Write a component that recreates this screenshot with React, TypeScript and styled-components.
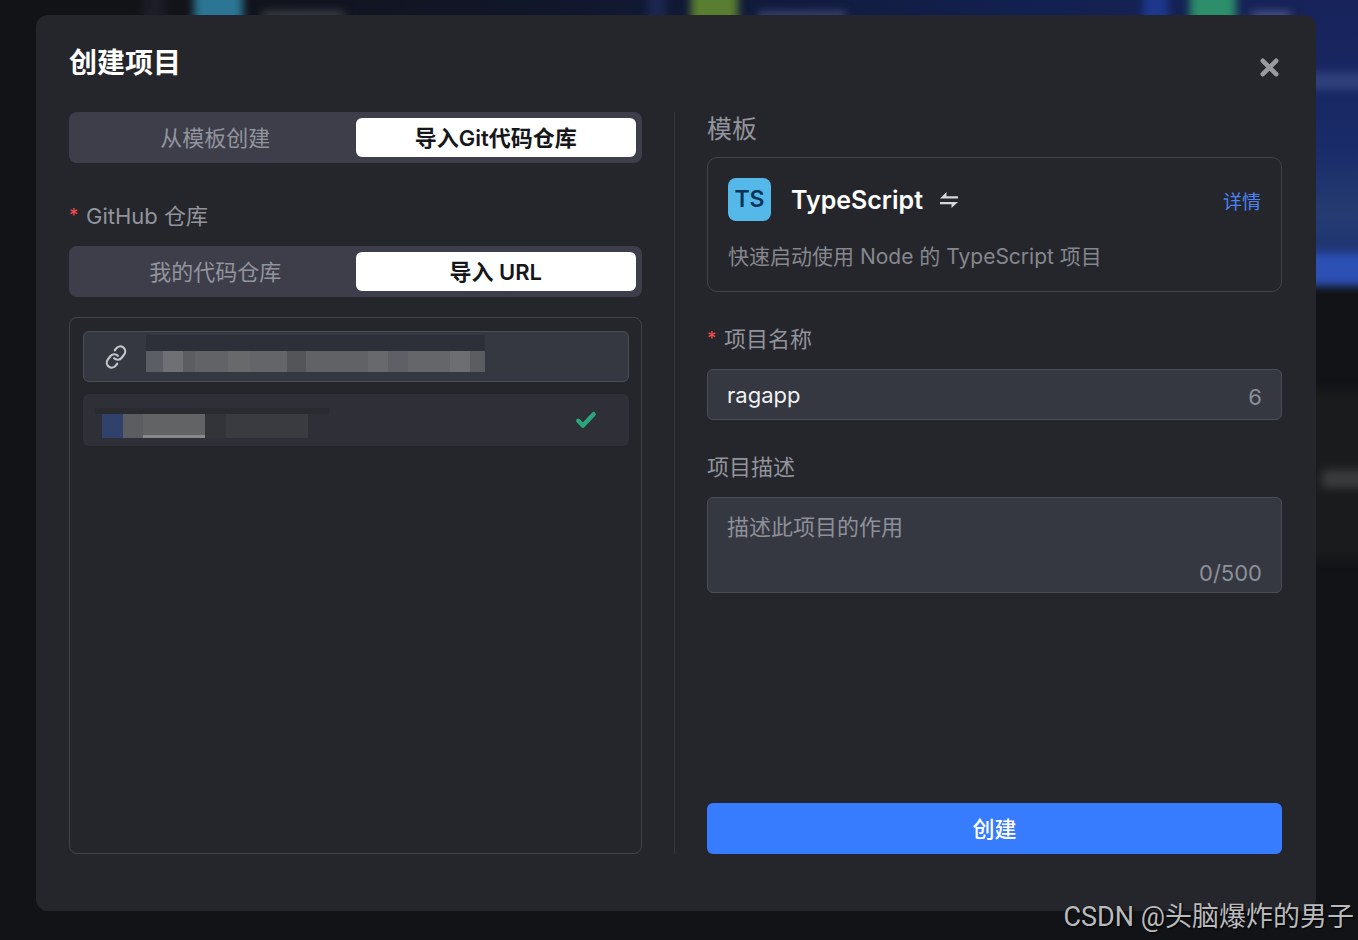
import React, { useState } from "react";
import styled, { createGlobalStyle } from "styled-components";

const cjk = `"Noto Sans CJK SC", sans-serif`;

const GlobalStyle = createGlobalStyle`
  * { box-sizing: border-box; }
  body { margin: 0; background: #121317; font-family: Inter, ${cjk}; color: #fff; }
  button, input, textarea { font-family: inherit; }
`;

const Page = styled.div`
  position: relative;
  display: flex;
  min-height: 100vh;
  padding: 15px 42px 29px 36px;
  overflow: hidden;
`;

const Scenery = styled.svg`
  position: absolute;
  inset: 0;
  width: 100%;
  height: 100%;
`;

const Watermark = styled.div`
  position: absolute;
  right: 4px;
  bottom: 3px;
  font: 27px/40px Roboto, ${cjk};
  color: #b9babb;
  text-shadow: 1px 1px 2px #000;
`;

const Dialog = styled.main`
  position: relative;
  display: flex;
  flex: 1;
  flex-direction: column;
  min-width: 0;
  padding: 28px 34px 57px 33px;
  border-radius: 12px;
  background: #25262b;
`;

const Header = styled.header`
  display: flex;
  align-items: center;
  justify-content: space-between;
  height: 40px;
  margin-bottom: 29px;
`;

const Title = styled.h1`
  margin: 0;
  font-size: 28px;
  line-height: 40px;
  font-weight: 600;
`;

const CloseButton = styled.button`
  display: flex;
  padding: 2px;
  margin-top: 8px;
  border: 0;
  background: none;
  cursor: pointer;
`;

const Body = styled.div`
  display: grid;
  flex: 1;
  grid-template-columns: minmax(0, 573fr) 1px minmax(0, 575fr);
  column-gap: 32px;
`;

const Divider = styled.div`
  background: #36383e;
`;

const Column = styled.div`
  display: flex;
  flex-direction: column;
`;

const Segmented = styled.div`
  display: grid;
  grid-template-columns: 1fr 1fr;
  height: 51px;
  padding: 6px;
  border-radius: 8px;
  background: #3d3e49;
`;

const Segment = styled.button<{ $active?: boolean }>`
  padding: 0;
  border: 0;
  border-radius: 6px;
  background: ${(p) => (p.$active ? "#fff" : "transparent")};
  color: ${(p) => (p.$active ? "#16171a" : "#92949e")};
  font-size: 22px;
  line-height: 38px;
  font-weight: ${(p) => (p.$active ? 600 : 400)};
  cursor: pointer;
`;

const Label = styled.label<{ $large?: boolean }>`
  display: flex;
  align-items: center;
  height: 32px;
  font-size: ${(p) => (p.$large ? 25 : 22)}px;
  line-height: 32px;
  color: #92949b;
`;

const Required = styled.span`
  width: 17px;
  font-size: 18px;
  line-height: 32px;
  font-weight: 500;
  color: #ee4a4f;
`;

const Group = styled.section<{ $top?: number; $gap?: number }>`
  display: flex;
  flex-direction: column;
  gap: ${(p) => p.$gap ?? 14}px;
  margin-top: ${(p) => p.$top ?? 0}px;
`;

const RepoPanel = styled.div`
  display: flex;
  flex: 1;
  flex-direction: column;
  gap: 12px;
  margin-top: 20px;
  padding: 13px 12px 13px 13px;
  border: 1px solid #414349;
  border-radius: 8px;
`;

const Field = styled.div`
  display: flex;
  align-items: center;
  height: 51px;
  padding: 0 19px;
  border: 1px solid #4b4e57;
  border-radius: 6px;
  background: #353841;
`;

const LinkMark = styled.svg`
  flex: none;
  margin: 0 18px 0 1px;
`;

const Mosaic = styled.svg`
  flex: none;
`;

const TextInput = styled.input`
  flex: 1;
  min-width: 0;
  padding: 0;
  border: 0;
  outline: 0;
  background: none;
  color: #f1f2f4;
  font-size: 22px;
  line-height: 32px;
`;

const Counter = styled.span`
  padding-top: 5px;
  color: #8d9099;
  font-size: 22px;
  line-height: 28px;
`;

const Result = styled.button`
  display: flex;
  align-items: center;
  justify-content: space-between;
  height: 52px;
  padding: 0 32px 0 12px;
  border: 0;
  border-radius: 6px;
  background: #2e2f37;
  cursor: pointer;
`;

const TemplateCard = styled.article`
  display: flex;
  flex-direction: column;
  gap: 20px;
  height: 135px;
  padding: 20px;
  border: 1px solid #414349;
  border-radius: 10px;
`;

const TemplateHead = styled.div`
  display: flex;
  align-items: center;
  height: 44px;
`;

const Badge = styled.span`
  width: 43px;
  height: 43px;
  margin-right: 20px;
  border-radius: 8px;
  background: #54b9e9;
  color: #0c3358;
  font-size: 23px;
  line-height: 43px;
  font-weight: 600;
  text-align: center;
`;

const TemplateName = styled.h2`
  margin: 0 16px 0 0;
  font-size: 25px;
  line-height: 32px;
  font-weight: 600;
`;

const SwapButton = styled.button`
  display: flex;
  padding: 0;
  border: 0;
  background: none;
  cursor: pointer;
`;

const DetailLink = styled.a`
  margin-left: auto;
  padding-top: 6px;
  color: #4b83f5;
  font-size: 19px;
  line-height: 28px;
  text-decoration: none;
`;

const TemplateText = styled.p`
  margin: 0;
  color: #85878e;
  font-size: 21px;
  line-height: 32px;
`;

const AreaBox = styled.div`
  display: flex;
  flex-direction: column;
  align-items: flex-end;
  height: 96px;
  padding: 13px 19px 5px;
  border: 1px solid #4b4e57;
  border-radius: 6px;
  background: #353841;
`;

const TextArea = styled.textarea`
  flex: 1;
  width: 100%;
  min-height: 32px;
  padding: 0;
  border: 0;
  outline: 0;
  resize: none;
  background: none;
  color: #f1f2f4;
  font-size: 22px;
  line-height: 32px;
  &::placeholder { color: #8d9099; opacity: 1; }
`;

const Submit = styled.button`
  height: 51px;
  margin-top: auto;
  border: 0;
  border-radius: 6px;
  background: #377cff;
  color: #fff;
  font-size: 22px;
  line-height: 32px;
  font-weight: 500;
  cursor: pointer;
`;

// start x, width and colour of each tile that hides the repository address
const urlTiles: [number, number, string][] = [
  [0, 17, "#5b5e64"], [17, 20, "#6f7074"], [37, 12, "#5c5d61"], [49, 33, "#626367"],
  [82, 22, "#68696b"], [104, 37, "#646568"], [141, 19, "#545559"], [160, 62, "#616266"],
  [222, 20, "#68696d"], [242, 20, "#5f6065"], [262, 42, "#656669"], [304, 20, "#6d6e71"], [324, 15, "#5c5d61"],
];

function Backdrop() {
  return (
    <Scenery aria-hidden="true" preserveAspectRatio="none" viewBox="0 0 1358 940">
      <defs>
        <linearGradient id="banner">
          <stop offset="0.1" stopColor="#121317" />
          <stop offset="0.4" stopColor="#11162a" />
          <stop offset="0.75" stopColor="#12204f" />
          <stop offset="1" stopColor="#182459" />
        </linearGradient>
        <linearGradient id="side" x2="0" y2="1">
          <stop offset="0" stopColor="#17225a" />
          <stop offset="0.55" stopColor="#192b69" />
          <stop offset="0.8" stopColor="#253b70" />
          <stop offset="1" stopColor="#1c3375" />
        </linearGradient>
        <filter id="soft" x="-10%" y="-10%" width="120%" height="120%" colorInterpolationFilters="sRGB"><feGaussianBlur stdDeviation="4" /></filter>
      </defs>
      <rect width="1358" height="40" fill="url(#banner)" />
      <rect x="1300" width="58" height="266" fill="url(#side)" />
      <g filter="url(#soft)">
        <rect x="142" y="-20" width="24" height="50" fill="#1c1d26" />
        <rect x="194" y="-20" width="49" height="50" fill="#2c7594" />
        <rect x="262" y="11" width="82" height="12" fill="#3b3d43" />
        <rect x="648" y="-20" width="18" height="50" fill="#1b2750" />
        <rect x="691" y="-20" width="47" height="50" fill="#5a7e31" />
        <rect x="758" y="11" width="88" height="12" fill="#37416d" />
        <rect x="1143" y="-20" width="25" height="50" fill="#1c378c" />
        <rect x="1190" y="-20" width="46" height="50" fill="#2c8e6b" />
        <rect x="1252" y="11" width="38" height="12" fill="#46508a" />
        <rect x="1290" y="72" width="90" height="18" fill="#2f407a" />
        <rect x="1290" y="253" width="90" height="33" fill="#2c50b4" />
        <rect x="1290" y="390" width="90" height="170" fill="#1a1b1c" />
        <rect x="1322" y="470" width="60" height="18" fill="#3a3b3d" />
      </g>
    </Scenery>
  );
}

export default function App() {
  const [name, setName] = useState("ragapp");
  const [description, setDescription] = useState("");
  return (
    <>
      <GlobalStyle />
      <Page>
        <Backdrop />
        <Dialog>
          <Header>
            <Title>创建项目</Title>
            <CloseButton aria-label="关闭">
              <svg width="21" height="21" viewBox="0 0 21 21" fill="none" stroke="#999a9f" strokeWidth="4.6" strokeLinecap="round"><path d="M3.8 3.8 17.2 17.2M17.2 3.8 3.8 17.2" /></svg>
            </CloseButton>
          </Header>
          <Body>
            <Column>
              <Segmented>
                <Segment>从模板创建</Segment>
                <Segment $active>导入Git代码仓库</Segment>
              </Segmented>
              <Group $top={37}>
                <Label htmlFor="repo-url"><Required>*</Required>GitHub 仓库</Label>
                <Segmented>
                  <Segment>我的代码仓库</Segment>
                  <Segment $active>导入 URL</Segment>
                </Segmented>
              </Group>
              <RepoPanel>
                <Field>
                  <LinkMark width="24" height="24" viewBox="0 0 24 24" fill="none" stroke="#c3c5ca" strokeWidth="2.2" strokeLinecap="round" strokeLinejoin="round">
                    <g transform="rotate(-8 12 12)">
                      <path d="M10 13a5 5 0 0 0 7.54.54l3-3a5 5 0 0 0-7.07-7.07l-1.72 1.71" />
                      <path d="M14 11a5 5 0 0 0-7.54-.54l-3 3a5 5 0 0 0 7.07 7.07l1.71-1.71" />
                    </g>
                  </LinkMark>
                  <Mosaic width="339" height="43" aria-hidden="true">
                    <rect width="339" height="16" fill="#2d3039" />
                    {urlTiles.map(([x, width, fill]) => <rect key={x} x={x} y="16" width={width} height="21" fill={fill} />)}
                  </Mosaic>
                  <TextInput id="repo-url" />
                </Field>
                <Result aria-label="仓库">
                  <Mosaic width="234" height="52" aria-hidden="true">
                    <rect y="14" width="234" height="6" fill="#2a2b31" />
                    <rect x="7" y="20" width="21" height="24" fill="#30426b" />
                    <rect x="28" y="20" width="20" height="24" fill="#5c5d61" />
                    <rect x="48" y="20" width="62" height="24" fill="#626365" />
                    <rect x="48" y="41" width="62" height="3" fill="#88898b" />
                    <rect x="110" y="20" width="21" height="24" fill="#333439" />
                    <rect x="131" y="20" width="82" height="24" fill="#3a3b40" />
                  </Mosaic>
                  <svg width="22" height="18" viewBox="0 0 22 18" fill="none" stroke="#29a67c" strokeWidth="4.4" strokeLinecap="round" strokeLinejoin="round"><path d="M3.2 9.8 8 14.6 18.6 3.2" /></svg>
                </Result>
              </RepoPanel>
            </Column>
            <Divider />
            <Column>
              <Group $top={1} $gap={12}>
                <Label as="div" $large>模板</Label>
                <TemplateCard>
                  <TemplateHead>
                    <Badge>TS</Badge>
                    <TemplateName>TypeScript</TemplateName>
                    <SwapButton aria-label="更换模板">
                      <svg width="20" height="18" viewBox="0 0 20 18" fill="#d5d6d8"><path d="M1 7.5H19V5.2H7.5V1z" /><path d="M19 11H1v2.3H12.5V17z" /></svg>
                    </SwapButton>
                    <DetailLink href="#details">详情</DetailLink>
                  </TemplateHead>
                  <TemplateText>快速启动使用 Node 的 TypeScript 项目</TemplateText>
                </TemplateCard>
              </Group>
              <Group $top={31}>
                <Label htmlFor="project-name"><Required>*</Required>项目名称</Label>
                <Field>
                  <TextInput id="project-name" value={name} onChange={(e) => setName(e.target.value)} />
                  <Counter>{name.length}</Counter>
                </Field>
              </Group>
              <Group $top={31}>
                <Label htmlFor="project-description">项目描述</Label>
                <AreaBox>
                  <TextArea id="project-description" placeholder="描述此项目的作用" value={description} onChange={(e) => setDescription(e.target.value)} />
                  <Counter>{description.length}/500</Counter>
                </AreaBox>
              </Group>
              <Submit>创建</Submit>
            </Column>
          </Body>
        </Dialog>
        <Watermark>CSDN @头脑爆炸的男子</Watermark>
      </Page>
    </>
  );
}
